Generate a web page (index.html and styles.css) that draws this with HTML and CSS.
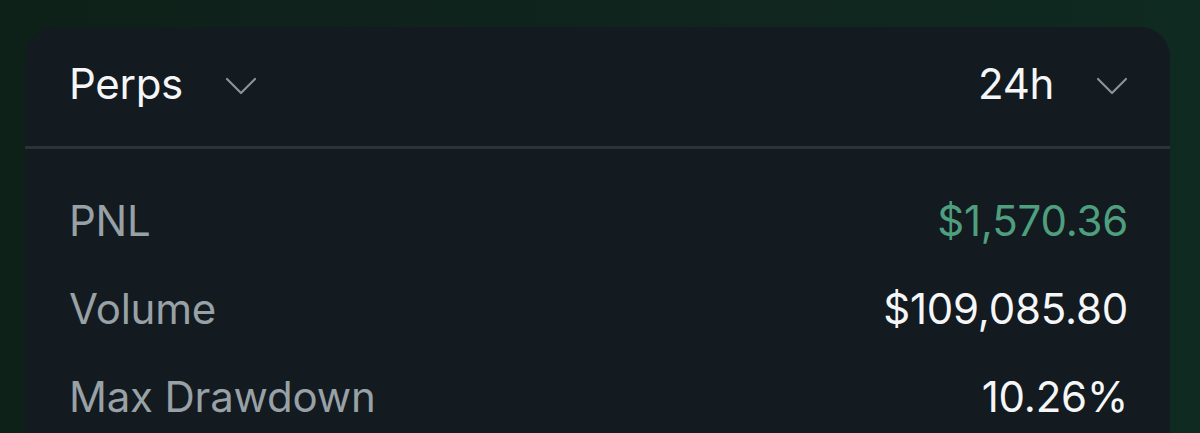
FILE: index.html
```html
<!DOCTYPE html>
<html>
<head>
<meta charset="utf-8">
<link rel="stylesheet" href="styles.css">
</head>
<body>
<div class="card">
  <div class="header">
    <div class="select">
      <span class="select-label">Perps</span>
      <svg class="chev" width="32" height="18" viewBox="0 0 32 18"><path d="M2 2 L16 16 L30 2" fill="none" stroke="#8a9297" stroke-width="2.2" stroke-linecap="round" stroke-linejoin="round"/></svg>
    </div>
    <div class="select">
      <span class="select-label">24h</span>
      <svg class="chev" width="32" height="18" viewBox="0 0 32 18"><path d="M2 2 L16 16 L30 2" fill="none" stroke="#8a9297" stroke-width="2.2" stroke-linecap="round" stroke-linejoin="round"/></svg>
    </div>
  </div>
  <div class="rows">
    <div class="row"><span class="label">PNL</span><span class="value positive">$1,570.36</span></div>
    <div class="row"><span class="label">Volume</span><span class="value">$109,085.80</span></div>
    <div class="row"><span class="label">Max Drawdown</span><span class="value">10.26%</span></div>
  </div>
</div>
</body>
</html>
```

FILE: styles.css
```css
html, body {
  margin: 0;
  padding: 0;
}
body {
  width: 1200px;
  height: 433px;
  overflow: hidden;
  background: linear-gradient(90deg, #0d2119 0%, #10241e 50%, #0f2a20 100%);
  padding: 27px 30px 0 25px;
  box-sizing: border-box;
  font-family: Inter, "Noto Sans", sans-serif;
}
.card {
  background: #131a20;
  border-radius: 30px 30px 0 0;
  height: 406px;
  overflow: hidden;
}
.header {
  display: flex;
  justify-content: space-between;
  align-items: center;
  padding: 0 42px 0 44px;
  border-bottom: 3px solid #2c3236;
  box-sizing: border-box;
  height: 122px;
}
.select {
  display: flex;
  align-items: center;
  gap: 42px;
  margin-top: -6px;
}
.select-label {
  color: #f4f6f7;
  font-size: 42px;
  letter-spacing: -0.3px;
}
.chev {
  display: block;
  margin-top: 4px;
}
.rows {
  padding: 27px 42px 0 44px;
}
.row {
  height: 88px;
  display: flex;
  justify-content: space-between;
  align-items: center;
  font-size: 42px;
  letter-spacing: -0.2px;
}
.label {
  color: #98a1a6;
}
.value {
  color: #f4f6f7;
}
.value.positive {
  color: #4e9f7e;
}
```
